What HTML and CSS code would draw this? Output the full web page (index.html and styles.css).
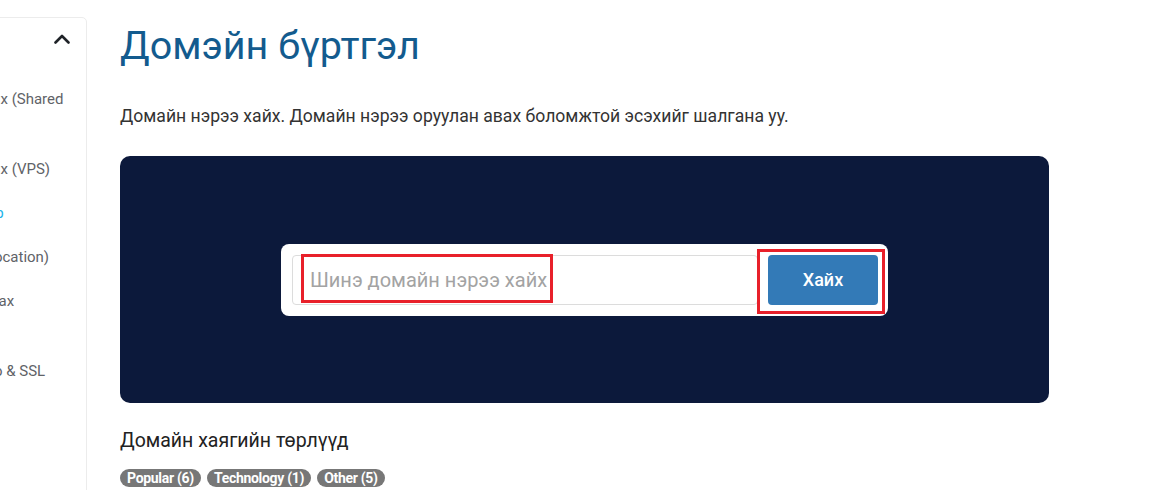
FILE: index.html
```html
<!DOCTYPE html>
<html lang="mn">
<head>
<meta charset="utf-8">
<title>Домэйн бүртгэл</title>
<link rel="stylesheet" href="styles.css">
</head>
<body>
<div class="page">
  <aside class="sidebar">
    <div class="side-card">
      <div class="side-head">
        <span class="side-title">Үйлчилгээ</span>
        <svg class="chevron" width="16" height="10" viewBox="0 0 16 10" aria-hidden="true"><path d="M1.5 8.5 L8 2 L14.5 8.5" fill="none" stroke="#1f2328" stroke-width="2.6" stroke-linecap="round" stroke-linejoin="round"/></svg>
      </div>
      <ul class="side-list">
        <li>Хостинг Linux (Shared Hosting)</li>
        <li>Хостинг Linux (VPS)</li>
        <li class="active">Cloud сервер</li>
        <li>Сервер (Colocation)</li>
        <li>Имэйл Go Max (Business)</li>
        <li>Хостинг Zero &amp; SSL</li>
      </ul>
    </div>
  </aside>

  <main class="main">
    <h1 class="title">Домэйн бүртгэл</h1>
    <p class="lead">Домайн нэрээ хайх. Домайн нэрээ оруулан авах боломжтой эсэхийг шалгана уу.</p>

    <section class="hero">
      <form class="search-box" onsubmit="return false">
        <input class="search-input" type="text" placeholder="Шинэ домайн нэрээ хайх">
        <button class="search-btn" type="submit">Хайх</button>
        <span class="mark mark-input"></span>
        <span class="mark mark-btn"></span>
      </form>
    </section>

    <h2 class="subhead">Домайн хаягийн төрлүүд</h2>
    <div class="tags">
      <span class="tag">Popular (6)</span>
      <span class="tag">Technology (1)</span>
      <span class="tag">Other (5)</span>
    </div>
  </main>
</div>
</body>
</html>
```

FILE: styles.css
```css
* { box-sizing: border-box; }

html, body {
  margin: 0;
  padding: 0;
  background: #ffffff;
  overflow: hidden;
}

body {
  font-family: Roboto, "Noto Sans", "Liberation Sans", sans-serif;
  color: #333;
}

.page {
  display: flex;
  align-items: flex-start;
  gap: 33px;
  height: 490px;
}

/* ---------- sidebar ---------- */
.sidebar {
  flex: 0 0 200px;
  margin-left: -113px;
  padding-top: 17px;
}

.side-card {
  border: 1px solid #ececec;
  border-radius: 5px;
  background: #fff;
  min-height: 480px;
}

.side-head {
  display: flex;
  justify-content: space-between;
  align-items: center;
  height: 42px;
  padding: 0 16px 0 24px;
}

.side-title {
  font-size: 15px;
  color: #333;
}

.chevron { display: block; }

.side-list {
  list-style: none;
  margin: 0;
  padding: 17px 0 0;
}

.side-list li {
  padding: 9px 16px 9px 24px;
  font-size: 15px;
  line-height: 26px;
  color: #5f6368;
}

.side-list li.active { color: #1eb4ea; }

/* ---------- main ---------- */
.main {
  flex: 0 0 929px;
  display: flex;
  flex-direction: column;
}

.title {
  margin: 24px 0 0;
  font-size: 39.5px;
  line-height: 44px;
  font-weight: 400;
  color: #135b8e;
}

.lead {
  margin: 37px 0 0;
  font-size: 17.6px;
  line-height: 22px;
  color: #333;
}

.hero {
  margin-top: 29px;
  height: 247px;
  border-radius: 10px;
  background: #0c193b;
  display: flex;
  align-items: center;
  justify-content: center;
}

.search-box {
  position: relative;
  width: 607px;
  height: 72px;
  margin: 0;
  padding: 11px 10px 11px 11px;
  background: #fff;
  border-radius: 8px;
  display: flex;
  gap: 10px;
}

.search-input {
  flex: 1;
  height: 50px;
  border: 1px solid #dcdcdc;
  border-radius: 4px;
  padding: 0 17px;
  font-family: inherit;
  font-size: 20px;
  color: #333;
  outline: none;
}

.search-input::placeholder { color: #a3a3a3; }

.search-btn {
  flex: 0 0 110px;
  height: 50px;
  border: none;
  border-radius: 4px;
  background: #337ab7;
  color: #fff;
  font-family: inherit;
  font-size: 18px;
  font-weight: 500;
  cursor: pointer;
}

.mark {
  position: absolute;
  border: 3px solid #e8202a;
  pointer-events: none;
}

.mark-input { left: 20px; top: 10px; width: 252px; height: 49px; }
.mark-btn { left: 476px; top: 5px; width: 128px; height: 65px; }

.subhead {
  margin: 26px 0 0;
  font-size: 19.5px;
  line-height: 24px;
  font-weight: 400;
  color: #222;
}

.tags {
  margin-top: 16px;
  display: flex;
  gap: 6px;
}

.tag {
  display: inline-block;
  padding: 0 7px;
  height: 18px;
  line-height: 18px;
  border-radius: 9px;
  background: #777;
  color: #fff;
  font-size: 14px;
  font-weight: 700;
  letter-spacing: -0.3px;
}
```
